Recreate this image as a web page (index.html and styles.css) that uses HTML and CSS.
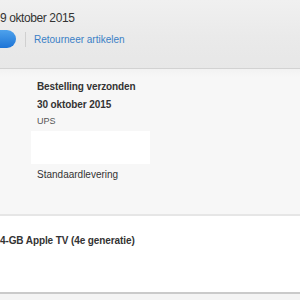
FILE: index.html
```html
<!DOCTYPE html>
<html lang="nl">
<head>
  <meta charset="UTF-8" />
  <title>Bestelling</title>
  <link rel="stylesheet" href="styles.css">
</head>
<body>
  <div class="order-header">
    <div class="order-date">9 oktober 2015</div>
    <div class="order-actions">
      <button class="pill-button"></button>
      <span class="divider"></span>
      <a class="return-link" href="#">Retourneer artikelen</a>
    </div>
  </div>

  <div class="shipment">
    <div class="shipment-title">Bestelling verzonden</div>
    <div class="shipment-date">30 oktober 2015</div>
    <div class="carrier">UPS</div>
    <div class="tracking-box"></div>
    <div class="delivery">Standaardlevering</div>
  </div>

  <div class="item">
    <div class="item-name">4-GB Apple TV (4e generatie)</div>
  </div>
  <div class="footer"></div>
</body>
</html>
```

FILE: styles.css
```css
* {
    margin: 0;
    padding: 0;
    box-sizing: border-box;
}

body {
    background-color: #f7f7f7;
    color: #333;
    font-family: 'Liberation Sans', Arial, sans-serif;
    overflow: hidden;
}

.order-header {
    height: 69px;
    background: linear-gradient(#f0f0f0, #eaeaea 55%, #e7e7e7);
    border-bottom: 1px solid #d2d2d2;
    box-shadow: 0 1px 1px #e4e4e4;
    padding-top: 11px;
}

.order-date {
    font-size: 12px;
    letter-spacing: -0.4px;
    color: #333;
}

.order-actions {
    display: flex;
    align-items: center;
    margin-top: 5px;
}

.pill-button {
    width: 42px;
    height: 18px;
    margin-left: -26px;
    border: none;
    border-radius: 9px;
    background: linear-gradient(#4ea2ec, #1d74d6);
}

.divider {
    width: 1px;
    height: 15px;
    background-color: #d0d0d0;
    margin-left: 9px;
}

.return-link {
    margin-left: 8px;
    font-size: 10px;
    color: #3a7fc6;
    text-decoration: none;
}

.shipment {
    height: 145px;
    padding: 12px 0 0 37px;
    background: linear-gradient(#f2f2f2, #f7f7f7 8px);
}

.shipment-title,
.shipment-date {
    font-size: 10px;
    font-weight: bold;
    letter-spacing: -0.1px;
}

.shipment-date {
    margin-top: 7px;
}

.carrier {
    font-size: 9px;
    color: #555;
    margin-top: 6px;
}

.tracking-box {
    width: 119px;
    height: 33px;
    margin: 5px 0 0 -6px;
    background-color: #fff;
}

.delivery {
    font-size: 10px;
    margin-top: 5px;
}

.item {
    height: 80px;
    background-color: #fff;
    border-top: 2px solid #e6e6e6;
    border-bottom: 2px solid #cacaca;
    padding-top: 19px;
}

.item-name {
    font-size: 10px;
    font-weight: bold;
    letter-spacing: -0.1px;
}

.footer {
    height: 10px;
    background-color: #f4f4f4;
}
```
